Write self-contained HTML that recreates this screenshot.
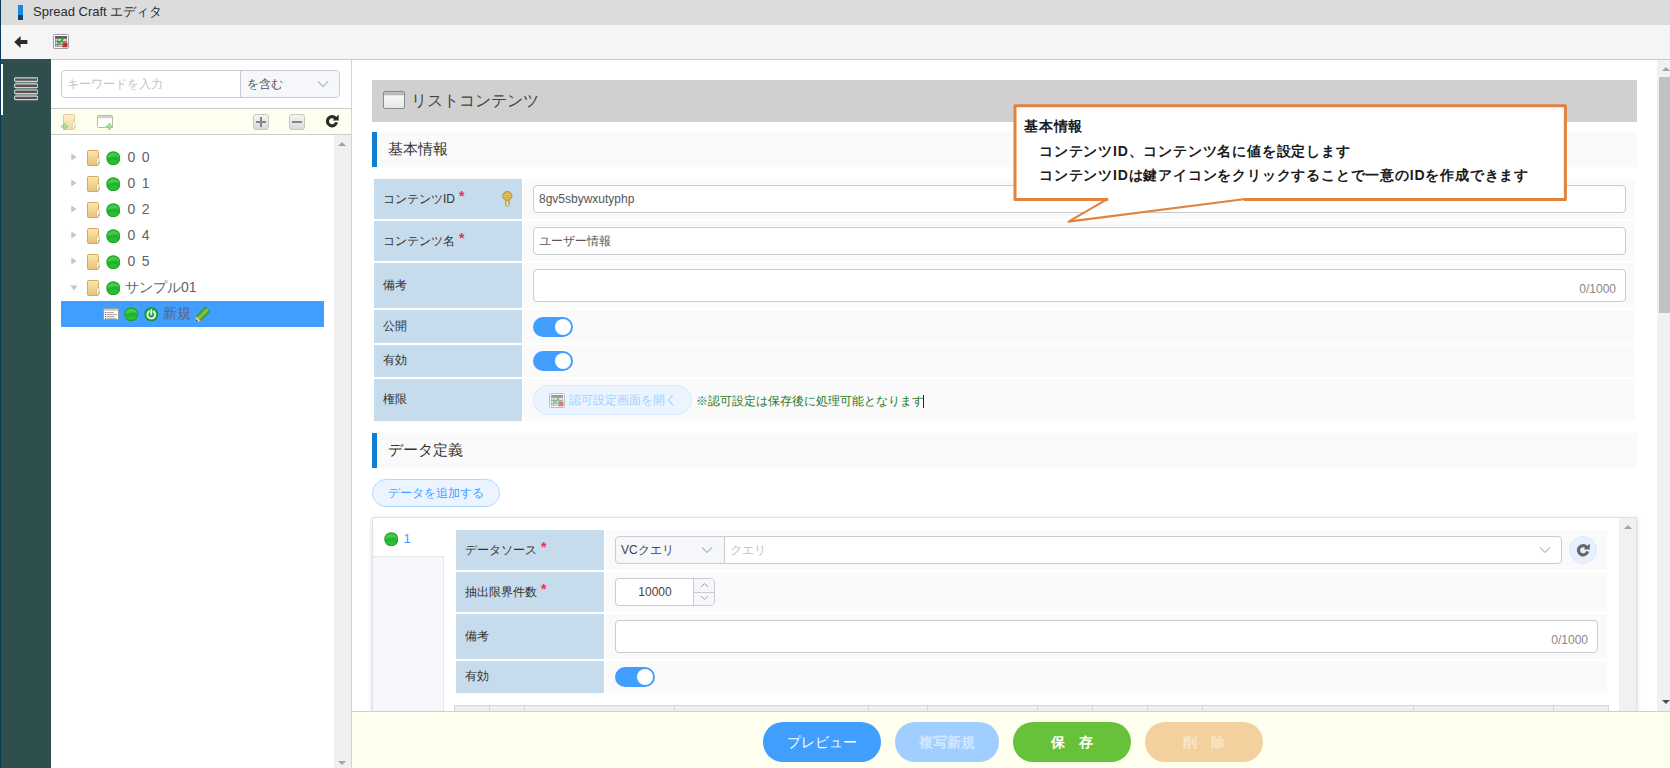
<!DOCTYPE html>
<html lang="ja">
<head>
<meta charset="utf-8">
<title>Spread Craft エディタ</title>
<style>
*{box-sizing:border-box;margin:0;padding:0}
html,body{width:1670px;height:768px;overflow:hidden;background:#fff}
body{font-family:"Liberation Sans",sans-serif;font-size:12px;color:#333;position:relative}
.abs{position:absolute}
/* top bars */
#titlebar{left:0;top:0;width:1670px;height:25px;background:#dcdcdc}
#titlebar .logo{left:18px;top:5px;width:5px;height:15px;background:#1589dd}
#titlebar .logo i{display:block;position:absolute;left:0;bottom:0;width:5px;height:5px;background:#0d4674}
#titlebar .ttl{left:33px;top:0;height:25px;line-height:23px;font-size:13px;color:#2b2b33;white-space:nowrap}
#toolbar{left:0;top:25px;width:1670px;height:35px;background:#f5f5f5;border-bottom:1px solid #c9c9c9}
#edge{left:0;top:0;width:1px;height:768px;background:#0b3a5a}
/* sidebar */
#side{left:1px;top:59px;width:50px;height:709px;background:#2f4f4f}
#side .act{left:0;top:5px;width:2px;height:51px;background:#fff}
/* left panel */
#left{left:51px;top:60px;width:301px;height:708px;background:#fff;border-right:1px solid #d4d4d4}
.inp{background:#fff;border:1px solid #c9cbd0;border-radius:4px;color:#555}
#search{left:10px;top:10px;width:279px;height:28px}
#search .ph{left:5px;top:0;line-height:26px;font-size:12px;color:#c0c4cc;white-space:nowrap}
#search .sel{left:178px;top:0;width:99px;height:26px;background:#f5f7fa;border-left:1px solid #c9cbd0;border-radius:0 3px 3px 0}
#search .sel span{position:absolute;left:5.5px;top:0;line-height:26px;font-size:12px;color:#555}
#ttool{left:0;top:48px;width:300px;height:27px;background:#fffff0;border-top:1px solid #ccc;border-bottom:1px solid #ccc}
#tscroll{left:283px;top:75px;width:17px;height:633px;background:#f0f0f0}
.tri-up{width:0;height:0;border-left:4px solid transparent;border-right:4px solid transparent;border-bottom:4px solid #a3a3a3}
.tri-dn{width:0;height:0;border-left:4px solid transparent;border-right:4px solid transparent;border-top:4px solid #a3a3a3}
.trow{left:0;width:283px;height:26px;line-height:26px;font-size:14px;color:#606266;white-space:nowrap}
.trow .tx{position:absolute;top:-1px}
#selrow{background:#409eff}
/* main */
#main{left:352px;top:60px;width:1305px;height:652px;background:#fff;overflow:hidden}
#mscroll{left:1657px;top:60px;width:13px;height:652px;background:#f1f1f1}
#mscroll .thumb{left:2px;top:17px;width:11px;height:236px;background:#c1c1c1}
#hdr{left:20px;top:20px;width:1265px;height:42px;background:#d0d0d0}
#hdr .t{left:39px;top:0;line-height:42px;font-size:16px;color:#444;white-space:nowrap}
.sec{left:20px;width:1265px;height:35px;background:#fafafa;border-left:5px solid #0e80cf}
.sec span{position:absolute;left:11px;top:0;line-height:34px;font-size:15px;color:#333;white-space:nowrap}
.lab{background:#c6dcec;color:#333;font-size:12px;white-space:nowrap}
.lab span{position:absolute;left:9px;top:50%;transform:translateY(-50%);line-height:16px;margin-top:-1px}
.lab b{font-weight:bold;color:#e6305c;font-size:14px;position:relative;top:-2.5px;margin-left:4px}
.val{background:#fafafa}
.sw{width:40px;height:20px;border-radius:10px;background:#409eff}
.sw i{position:absolute;right:2px;top:2px;width:16px;height:16px;border-radius:50%;background:#fff}
.cnt{font-size:12px;color:#888;white-space:nowrap}
/* footer */
#footer{left:352px;top:711px;width:1318px;height:57px;background:#fffff0;border-top:1px solid #cfcfcf}
.btn{top:10px;height:40px;border-radius:20px;color:#fff;font-size:14px;line-height:40px;text-align:center;white-space:nowrap}
</style>
</head>
<body>

<svg width="0" height="0" style="position:absolute">
  <defs>
    <linearGradient id="gFold" x1="0" y1="0" x2="0" y2="1"><stop offset="0" stop-color="#fde9ae"/><stop offset="1" stop-color="#e8c07a"/></linearGradient>
    <linearGradient id="gBtn" x1="0" y1="0" x2="0" y2="1"><stop offset="0" stop-color="#f6f6f4"/><stop offset="1" stop-color="#d9d9d6"/></linearGradient>
    <linearGradient id="gWin" x1="0" y1="0" x2="0" y2="1"><stop offset="0" stop-color="#ffffff"/><stop offset="1" stop-color="#e4e4e4"/></linearGradient>
    <radialGradient id="gBall" cx="0.5" cy="0.8" r="0.55"><stop offset="0" stop-color="#7be473"/><stop offset="0.7" stop-color="#3ccb38"/><stop offset="1" stop-color="#2cbc2c"/></radialGradient>
    <symbol id="iFolder" viewBox="0 0 14 16">
      <rect x="0.5" y="0.5" width="11" height="15" rx="1" fill="url(#gFold)" stroke="#d5a85f"/>
      <path d="M9.4 14.8 V9.4 Q9.4 8 10.8 7.8 Q12.3 7.8 12.3 9.4 V13.6 Q12 14.8 10.8 14.8 Z" fill="#fff8e4" stroke="#d5a85f" stroke-width=".7"/>
      <circle cx="11.7" cy="13" r=".8" fill="#58b7a6"/>
    </symbol>
    <symbol id="iBall" viewBox="0 0 15 15">
      <circle cx="7.5" cy="7.5" r="7.2" fill="#1c9f2a"/>
      <circle cx="7.5" cy="7.5" r="6.4" fill="#22b527"/>
      <path d="M1.3 7.2 A6.3 6.3 0 0 1 13.7 7.2 Q11.5 4.6 7.8 5.6 Q4 6.4 1.3 7.2 Z" fill="#44cb4b"/>
      <ellipse cx="7.5" cy="11.2" rx="4.2" ry="2" fill="#2fc234" opacity=".7"/>
    </symbol>
    <symbol id="iPower" viewBox="0 0 15 15">
      <circle cx="7.5" cy="7.5" r="7.2" fill="#178f3c"/>
      <circle cx="7.5" cy="7.5" r="6.1" fill="#29ad46"/>
      <path d="M5.1 4.6 A4 4 0 1 0 9.9 4.6" fill="none" stroke="#fff" stroke-width="1.7" stroke-linecap="round"/>
      <path d="M7.5 2.8 V7.4" stroke="#fff" stroke-width="1.7" stroke-linecap="round"/>
    </symbol>
    <symbol id="iList" viewBox="0 0 16 12">
      <rect x="0.5" y="0.5" width="15" height="11" rx="1" fill="#fff" stroke="#9a9a9a"/>
      <rect x="1" y="1" width="14" height="1.8" fill="#c9c9c9"/>
      <g fill="#c44"><rect x="2" y="4" width="1.2" height="1.2"/><rect x="2" y="6" width="1.2" height="1.2"/><rect x="2" y="8" width="1.2" height="1.2"/><rect x="2" y="9.8" width="1.2" height="1"/></g>
      <g fill="#9a9a9a"><rect x="4" y="4.2" width="7" height=".9"/><rect x="4" y="6.2" width="10" height=".9"/><rect x="4" y="8.2" width="7.5" height=".9"/><rect x="4" y="9.9" width="9" height=".8"/></g>
    </symbol>
    <symbol id="iPencil" viewBox="0 0 16 16">
      <path d="M10.6 0.8 L15.2 5.4 L5.6 15 L1 10.4 Z" fill="#55a630" stroke="#3c7d20" stroke-width=".8"/>
      <path d="M12 2.2 L13.8 4 L4.2 13.6 L2.4 11.8 Z" fill="#7cc653"/>
      <path d="M1 10.4 L5.6 15 L0.6 15.6 Z" fill="#f1dcae" stroke="#b9a376" stroke-width=".5"/>
      <path d="M0.6 15.6 L1.2 13.3 L2.7 14.8 Z" fill="#333"/>
    </symbol>
    <symbol id="iAuth" viewBox="0 0 16 15">
      <rect x="0.5" y="0.5" width="15" height="14" rx="1" fill="#fff" stroke="#9c9c9c"/>
      <rect x="2" y="2" width="12" height="11" fill="#7a7a7a"/>
      <rect x="2" y="2" width="12" height="2" fill="#5f5f5f"/>
      <g fill="#dcdcdc"><rect x="5" y="5" width="4" height="2"/><rect x="10" y="5" width="3.5" height="2"/><rect x="5" y="8" width="4" height="2"/><rect x="5" y="11" width="4" height="1.5"/><rect x="2.6" y="5" width="1.6" height="2"/><rect x="2.6" y="8" width="1.6" height="2"/><rect x="2.6" y="11" width="1.6" height="1.5"/></g>
      <path d="M4.2 6.6 L6.6 9 L10.4 4.2" fill="none" stroke="#2fae3d" stroke-width="2"/>
      <rect x="9.6" y="8.4" width="5" height="5" fill="#c62b2b" stroke="#f3c9c9" stroke-width=".8" stroke-dasharray="1 .8"/>
    </symbol>
    <symbol id="iWin" viewBox="0 0 22 18">
      <rect x="0.5" y="0.5" width="21" height="17" rx="1.5" fill="url(#gWin)" stroke="#8a8a8a"/>
      <path d="M1 3.6 V2 Q1 1 2 1 H20 Q21 1 21 2 V3.6 Z" fill="#bdbdbd"/>
      <rect x="1" y="3.4" width="20" height=".8" fill="#9d9d9d"/>
    </symbol>
    <symbol id="iKey" viewBox="0 0 11 16">
      <path d="M3.6 8.6 H6.6 V10.2 L7.7 10.7 L6.6 11.4 L7.7 12.1 L6.6 12.8 L7.4 13.6 L5.2 15.7 L3.6 14.4 Z" fill="#ecd78a" stroke="#9f8230" stroke-width=".7" stroke-linejoin="round"/>
      <ellipse cx="5.3" cy="4.9" rx="4.6" ry="4.4" fill="#e3c252" stroke="#9f8230" stroke-width=".8"/>
      <ellipse cx="5.3" cy="3.5" rx="2.3" ry="1" fill="#f4e4a0" stroke="#9f8230" stroke-width=".6"/>
      <path d="M2.3 6.3 Q5.3 7.6 8.3 6.3" fill="none" stroke="#bd9a36" stroke-width=".7"/>
    </symbol>
    <symbol id="iRefresh" viewBox="0 0 14 14">
      <path d="M10.6 4.3 A4.6 4.6 0 1 0 11.6 8.3" fill="none" stroke="currentColor" stroke-width="3.2"/>
      <path d="M13.8 0.4 V6.6 H7.6 Z" fill="currentColor"/>
    </symbol>
    <symbol id="iPlusG" viewBox="0 0 8 8">
      <path d="M3.1 0.7 H4.9 V3.1 H7.3 V4.9 H4.9 V7.3 H3.1 V4.9 H0.7 V3.1 H3.1 Z" fill="#6fe072" stroke="#3cae44" stroke-width=".9" stroke-linejoin="round"/>
    </symbol>
  </defs>
</svg>
<div id="titlebar" class="abs">
  <div class="logo abs"><i></i></div>
  <div class="ttl abs">Spread Craft エディタ</div>
</div>
<div id="toolbar" class="abs">
  <svg class="abs" style="left:14px;top:11px" width="14" height="12" viewBox="0 0 14 12"><path d="M0.2 6 L6.6 0 V3.9 H13.4 V8.1 H6.6 V12 Z" fill="#2b2b2b"/></svg>
  <svg class="abs" style="left:53px;top:9px" width="16" height="15"><use href="#iAuth"/></svg>
</div>
<div id="side" class="abs"><div class="act abs"></div>
  <svg class="abs" style="left:13px;top:18px" width="24.3" height="24" viewBox="0 0 25 24" preserveAspectRatio="none">
    <rect x="1.5" y="2" width="22" height="20" fill="#fff" opacity=".28"/><g fill="#5b5050" stroke="#c9d4d4" stroke-width="1.2"><rect x=".6" y="0.8" width="23.8" height="3.6" rx="1"/><rect x=".6" y="6.9" width="23.8" height="3.6" rx="1"/><rect x=".6" y="13.0" width="23.8" height="3.6" rx="1"/><rect x=".6" y="19.1" width="23.8" height="3.6" rx="1"/></g>
  </svg>
</div>
<div id="edge" class="abs"></div>

<div id="left" class="abs">
  <div id="search" class="abs inp">
    <div class="ph abs">キーワードを入力</div>
    <div class="sel abs"><span>を含む</span><svg class="abs" style="right:10px;top:9px" width="12" height="8" viewBox="0 0 12 8"><path d="M1 1.5 L6 6.5 L11 1.5" fill="none" stroke="#b4b8c0" stroke-width="1.2"/></svg></div>
  </div>
  <div id="ttool" class="abs">
    <div class="abs" style="left:10px;top:5px;width:16px;height:17px;opacity:.62">
      <svg class="abs" style="left:2px;top:0" width="14" height="16"><use href="#iFolder"/></svg>
      <svg class="abs" style="left:0;top:9px" width="7" height="7"><use href="#iPlusG"/></svg>
    </div>
    <div class="abs" style="left:46px;top:6px;width:17px;height:16px;opacity:.62">
      <svg class="abs" style="left:0;top:0" width="16" height="13" viewBox="0 0 16 13"><rect x=".5" y=".5" width="15" height="12" rx="1" fill="#fff" stroke="#8f8f8f"/><rect x="1" y="1" width="14" height="2.2" fill="#b9b9b9"/></svg>
      <svg class="abs" style="left:9px;top:8px" width="7" height="7"><use href="#iPlusG"/></svg>
    </div>
    <svg class="abs" style="left:202px;top:5px" width="16" height="16" viewBox="0 0 16 16"><rect x=".5" y=".5" width="15" height="15" rx="2.5" fill="url(#gBtn)" stroke="#c6c6c2"/><path d="M3 8 H13 M8 3 V13" stroke="#858585" stroke-width="2"/></svg>
    <svg class="abs" style="left:238px;top:5px" width="16" height="16" viewBox="0 0 16 16"><rect x=".5" y=".5" width="15" height="15" rx="2.5" fill="url(#gBtn)" stroke="#c6c6c2"/><path d="M3 8 H13" stroke="#858585" stroke-width="2"/></svg>
    <svg class="abs" style="left:274.3px;top:5.3px;color:#2b2b2b" width="13.9" height="13.9"><use href="#iRefresh"/></svg>
  </div>
  <div id="tree" class="abs" style="left:0;top:75px;width:283px;height:633px">
    <div class="trow abs" style="top:10px">
      <svg class="abs" style="left:20px;top:8.4px" width="6" height="8" viewBox="0 0 6 8"><path d="M0.3 0.5 L5.5 4 L0.3 7.5 Z" fill="#c0c4cc"/></svg>
      <svg class="abs" style="left:36px;top:5px" width="14" height="16"><use href="#iFolder"/></svg>
      <svg class="abs" style="left:54.6px;top:5.6px" width="14.6" height="14.6"><use href="#iBall"/></svg>
      <span class="tx" style="left:76.5px;letter-spacing:1.3px">0 0</span>
    </div>
    <div class="trow abs" style="top:36px">
      <svg class="abs" style="left:20px;top:8.4px" width="6" height="8" viewBox="0 0 6 8"><path d="M0.3 0.5 L5.5 4 L0.3 7.5 Z" fill="#c0c4cc"/></svg>
      <svg class="abs" style="left:36px;top:5px" width="14" height="16"><use href="#iFolder"/></svg>
      <svg class="abs" style="left:54.6px;top:5.6px" width="14.6" height="14.6"><use href="#iBall"/></svg>
      <span class="tx" style="left:76.5px;letter-spacing:1.3px">0 1</span>
    </div>
    <div class="trow abs" style="top:62px">
      <svg class="abs" style="left:20px;top:8.4px" width="6" height="8" viewBox="0 0 6 8"><path d="M0.3 0.5 L5.5 4 L0.3 7.5 Z" fill="#c0c4cc"/></svg>
      <svg class="abs" style="left:36px;top:5px" width="14" height="16"><use href="#iFolder"/></svg>
      <svg class="abs" style="left:54.6px;top:5.6px" width="14.6" height="14.6"><use href="#iBall"/></svg>
      <span class="tx" style="left:76.5px;letter-spacing:1.3px">0 2</span>
    </div>
    <div class="trow abs" style="top:88px">
      <svg class="abs" style="left:20px;top:8.4px" width="6" height="8" viewBox="0 0 6 8"><path d="M0.3 0.5 L5.5 4 L0.3 7.5 Z" fill="#c0c4cc"/></svg>
      <svg class="abs" style="left:36px;top:5px" width="14" height="16"><use href="#iFolder"/></svg>
      <svg class="abs" style="left:54.6px;top:5.6px" width="14.6" height="14.6"><use href="#iBall"/></svg>
      <span class="tx" style="left:76.5px;letter-spacing:1.3px">0 4</span>
    </div>
    <div class="trow abs" style="top:114px">
      <svg class="abs" style="left:20px;top:8.4px" width="6" height="8" viewBox="0 0 6 8"><path d="M0.3 0.5 L5.5 4 L0.3 7.5 Z" fill="#c0c4cc"/></svg>
      <svg class="abs" style="left:36px;top:5px" width="14" height="16"><use href="#iFolder"/></svg>
      <svg class="abs" style="left:54.6px;top:5.6px" width="14.6" height="14.6"><use href="#iBall"/></svg>
      <span class="tx" style="left:76.5px;letter-spacing:1.3px">0 5</span>
    </div>
    <div class="trow abs" style="top:140px">
      <svg class="abs" style="left:19px;top:10px" width="8" height="6" viewBox="0 0 8 6"><path d="M0.4 0.4 H7.6 L4 5.6 Z" fill="#c0c4cc"/></svg>
      <svg class="abs" style="left:36px;top:5px" width="14" height="16"><use href="#iFolder"/></svg>
      <svg class="abs" style="left:54.6px;top:5.6px" width="14.6" height="14.6"><use href="#iBall"/></svg>
      <span class="tx" style="left:74px">サンプル01</span>
    </div>
    <div id="selrow" class="abs" style="left:10px;top:166px;width:263px;height:26px"></div>
    <div class="trow abs" style="top:166px">
      <svg class="abs" style="left:52px;top:7px" width="16" height="12"><use href="#iList"/></svg>
      <svg class="abs" style="left:73px;top:5.6px" width="14.6" height="14.6"><use href="#iBall"/></svg>
      <svg class="abs" style="left:93px;top:5.6px" width="14.6" height="14.6"><use href="#iPower"/></svg>
      <span class="tx" style="left:111.5px;top:-1px">新規</span>
      <svg class="abs" style="left:144px;top:4.5px" width="16" height="16"><use href="#iPencil"/></svg>
    </div>
  </div>
  <div id="tscroll" class="abs">
    <div class="tri-up abs" style="left:4px;top:7px"></div>
    <div class="tri-dn abs" style="left:4px;bottom:3px"></div>
  </div>
</div>

<div id="main" class="abs">
  <div id="hdr" class="abs"><svg class="abs" style="left:11px;top:11px" width="22" height="18"><use href="#iWin"/></svg><div class="t abs">リストコンテンツ</div></div>
  <div class="sec abs" style="top:72px;height:35px"><span>基本情報</span></div>

  <!-- basic info rows -->
  <div class="lab abs" style="left:22px;top:119px;width:148px;height:40px"><span>コンテンツID<b>*</b></span><svg class="abs" style="left:127.5px;top:12px" width="11" height="16"><use href="#iKey"/></svg></div>
  <div class="val abs" style="left:172px;top:119px;width:1111px;height:40px"></div>
  <div class="inp abs" style="left:181px;top:125px;width:1093px;height:28px;line-height:26px;padding-left:5px;font-size:12px;color:#555">8gv5sbywxutyphp</div>

  <div class="lab abs" style="left:22px;top:161px;width:148px;height:40px"><span>コンテンツ名<b>*</b></span></div>
  <div class="val abs" style="left:172px;top:161px;width:1111px;height:40px"></div>
  <div class="inp abs" style="left:181px;top:167px;width:1093px;height:28px;line-height:26px;padding-left:5px;font-size:12px;color:#555">ユーザー情報</div>

  <div class="lab abs" style="left:22px;top:203px;width:148px;height:45px"><span>備考</span></div>
  <div class="val abs" style="left:172px;top:203px;width:1111px;height:45px"></div>
  <div class="inp abs" style="left:181px;top:209px;width:1093px;height:33px"><div class="cnt abs" style="right:9px;top:12px">0/1000</div></div>

  <div class="lab abs" style="left:22px;top:250px;width:148px;height:33px"><span>公開</span></div>
  <div class="val abs" style="left:172px;top:250px;width:1111px;height:33px"></div>
  <div class="sw abs" style="left:181px;top:257px"><i></i></div>

  <div class="lab abs" style="left:22px;top:285px;width:148px;height:32px"><span>有効</span></div>
  <div class="val abs" style="left:172px;top:285px;width:1111px;height:32px"></div>
  <div class="sw abs" style="left:181px;top:291px"><i></i></div>

  <div class="lab abs" style="left:22px;top:319px;width:148px;height:42px"><span>権限</span></div>
  <div class="val abs" style="left:172px;top:319px;width:1111px;height:42px"></div>
  <div class="abs" id="authbtn" style="left:181px;top:325px;width:159px;height:30px;border-radius:15px;background:#ecf5ff;border:1px solid #d9ecff;color:#a0cfff;font-size:12px;line-height:28px;white-space:nowrap"><svg class="abs" style="left:15px;top:7px;opacity:.6" width="16" height="15"><use href="#iAuth"/></svg><span class="abs" style="left:34.5px;top:0">認可設定画面を開く</span></div>
  <div class="abs" style="left:344px;top:326px;line-height:30px;font-size:12px;color:#1f7a1f;white-space:nowrap">※認可設定は保存後に処理可能となります<span style="display:inline-block;width:1px;height:13px;background:#1c2c1c;vertical-align:-3px;margin-left:-1px"></span></div>

  <div class="sec abs" style="top:373px;height:35px"><span>データ定義</span></div>
  <div class="abs" id="addbtn" style="left:20px;top:419px;width:128px;height:28px;border-radius:14px;background:#ecf5ff;border:1px solid #b3d8ff;color:#409eff;font-size:12px;line-height:26px;text-align:center;white-space:nowrap">データを追加する</div>

  <!-- data definition panel -->
  <div class="abs" id="panel" style="left:20px;top:457px;width:1265px;height:260px;background:#fff;border:1px solid #dcdfe6;box-shadow:0 2px 4px rgba(0,0,0,.12),0 0 6px rgba(0,0,0,.04)">
    <div class="abs" style="left:0;top:38px;width:71px;height:230px;background:#f5f7fa;border-top:1px solid #e4e7ed;border-right:1px solid #e4e7ed"></div>
    <svg class="abs" style="left:10.6px;top:13.6px" width="14.6" height="14.6"><use href="#iBall"/></svg>
    <div class="abs" style="left:30.5px;top:13px;font-size:13px;line-height:16px;color:#409eff">1</div>

    <div class="lab abs" style="left:83px;top:12px;width:148px;height:40px"><span>データソース<b>*</b></span></div>
    <div class="val abs" style="left:233px;top:12px;width:1001px;height:40px"></div>
    <div class="inp abs" style="left:242px;top:18px;width:110px;height:28px;background:#f5f7fa;border-radius:4px 0 0 4px;line-height:26px;padding-left:5px;font-size:12px;color:#444">VCクエリ<svg class="abs" style="right:11px;top:9px" width="12" height="8" viewBox="0 0 12 8"><path d="M1 1.5 L6 6.5 L11 1.5" fill="none" stroke="#b4b8c0" stroke-width="1.2"/></svg></div>
    <div class="inp abs" style="left:351px;top:18px;width:838px;height:28px;border-radius:0 4px 4px 0;line-height:26px;padding-left:5px;font-size:12px;color:#c0c4cc">クエリ<svg class="abs" style="right:10px;top:9px" width="12" height="8" viewBox="0 0 12 8"><path d="M1 1.5 L6 6.5 L11 1.5" fill="none" stroke="#bfc3ca" stroke-width="1.2"/></svg></div>
    <div class="abs" style="left:1196px;top:18px;width:28px;height:28px;border-radius:50%;background:#e6f1fd;border:1px solid #dcebfb"><svg class="abs" style="left:5.6px;top:6px;color:#66686c" width="14" height="14"><use href="#iRefresh"/></svg></div>

    <div class="lab abs" style="left:83px;top:54px;width:148px;height:40px"><span>抽出限界件数<b>*</b></span></div>
    <div class="val abs" style="left:233px;top:54px;width:1001px;height:40px"></div>
    <div class="inp abs" style="left:242px;top:60px;width:100px;height:28px;overflow:hidden">
      <div class="abs" style="left:0;top:0;width:78px;line-height:26px;text-align:center;font-size:12px;color:#444">10000</div>
      <div class="abs" style="left:77px;top:0;width:21px;height:26px;background:#f5f7fa;border-left:1px solid #c9cbd0"></div>
      <div class="abs" style="left:78px;top:13px;width:20px;height:1px;background:#c9cbd0"></div>
      <svg class="abs" style="left:83.5px;top:2.5px" width="9" height="6" viewBox="0 0 9 6"><path d="M1 5 L4.5 1.5 L8 5" fill="none" stroke="#9a9fa8" stroke-width="1"/></svg>
      <svg class="abs" style="left:83.5px;top:15.5px" width="9" height="6" viewBox="0 0 9 6"><path d="M1 1 L4.5 4.5 L8 1" fill="none" stroke="#9a9fa8" stroke-width="1"/></svg>
    </div>

    <div class="lab abs" style="left:83px;top:96px;width:148px;height:45px"><span>備考</span></div>
    <div class="val abs" style="left:233px;top:96px;width:1001px;height:45px"></div>
    <div class="inp abs" style="left:242px;top:102px;width:983px;height:33px"><div class="cnt abs" style="right:9px;top:12px">0/1000</div></div>

    <div class="lab abs" style="left:83px;top:143px;width:148px;height:32px"><span>有効</span></div>
    <div class="val abs" style="left:233px;top:143px;width:1001px;height:32px"></div>
    <div class="sw abs" style="left:242px;top:149px"><i></i></div>

    <div class="abs" id="thead" style="left:81px;top:187px;width:1155px;height:30px;background:#efefef;border:1px solid #d6d6d6"><i style="position:absolute;left:34px;top:0;width:1px;height:30px;background:#d6d6d6"></i><i style="position:absolute;left:69px;top:0;width:1px;height:30px;background:#d6d6d6"></i><i style="position:absolute;left:219px;top:0;width:1px;height:30px;background:#d6d6d6"></i><i style="position:absolute;left:413px;top:0;width:1px;height:30px;background:#d6d6d6"></i><i style="position:absolute;left:472px;top:0;width:1px;height:30px;background:#d6d6d6"></i><i style="position:absolute;left:582px;top:0;width:1px;height:30px;background:#d6d6d6"></i><i style="position:absolute;left:637px;top:0;width:1px;height:30px;background:#d6d6d6"></i><i style="position:absolute;left:692px;top:0;width:1px;height:30px;background:#d6d6d6"></i><i style="position:absolute;left:747px;top:0;width:1px;height:30px;background:#d6d6d6"></i><i style="position:absolute;left:958px;top:0;width:1px;height:30px;background:#d6d6d6"></i><i style="position:absolute;left:1098px;top:0;width:1px;height:30px;background:#d6d6d6"></i></div>

    <div class="abs" style="left:1246px;top:0;width:17px;height:258px;background:#f1f1f1">
      <div class="tri-up abs" style="left:4.5px;top:7px;border-bottom-color:#a3a3a3"></div>
    </div>
  </div>
</div>
<div id="mscroll" class="abs"><div class="thumb abs"></div><div class="tri-up abs" style="left:5px;top:7px"></div><div class="tri-dn abs" style="left:5px;top:640px;border-top-color:#505050"></div></div>


<!-- callout -->
<svg class="abs" style="left:1000px;top:95px;z-index:5" width="580" height="135" viewBox="1000 95 580 135">
  <path d="M1015 105.8 H1565.4 V199.4 H1245 L1068.5 221.6 L1106.5 199.4 H1015 Z" fill="#fff"/>
  <path d="M1245 199.4 H1565.4 V105.8 H1015 V199.4 H1107" fill="none" stroke="#e2823c" stroke-width="3" stroke-linejoin="round" stroke-linecap="round"/>
  <path d="M1245.5 199 L1068.5 221.6 L1106.5 199.6" fill="none" stroke="#e2823c" stroke-width="2.2" stroke-linejoin="round" stroke-linecap="round"/>
</svg>
<div class="abs" id="cotext" style="left:1024px;top:114px;z-index:6;font-weight:bold;font-size:14px;letter-spacing:.8px;line-height:24.5px;color:#1a1a1a;white-space:nowrap">
  <div>基本情報</div>
  <div style="padding-left:15px">コンテンツID、コンテンツ名に値を設定します</div>
  <div style="padding-left:15px">コンテンツIDは鍵アイコンをクリックすることで一意のIDを作成できます</div>
</div>

<div id="footer" class="abs">
  <div class="btn abs" style="left:411px;width:118px;background:#409eff">プレビュー</div>
  <div class="btn abs" style="left:543px;width:104px;background:#a0cfff;font-weight:bold;color:#d3e8ff">複写新規</div>
  <div class="btn abs" style="left:661px;width:118px;background:#67c23a;font-weight:bold">保　存</div>
  <div class="btn abs" style="left:793px;width:118px;background:#f3d19e;font-weight:bold;color:#f9e6c8">削　除</div>
</div>
</body>
</html>
